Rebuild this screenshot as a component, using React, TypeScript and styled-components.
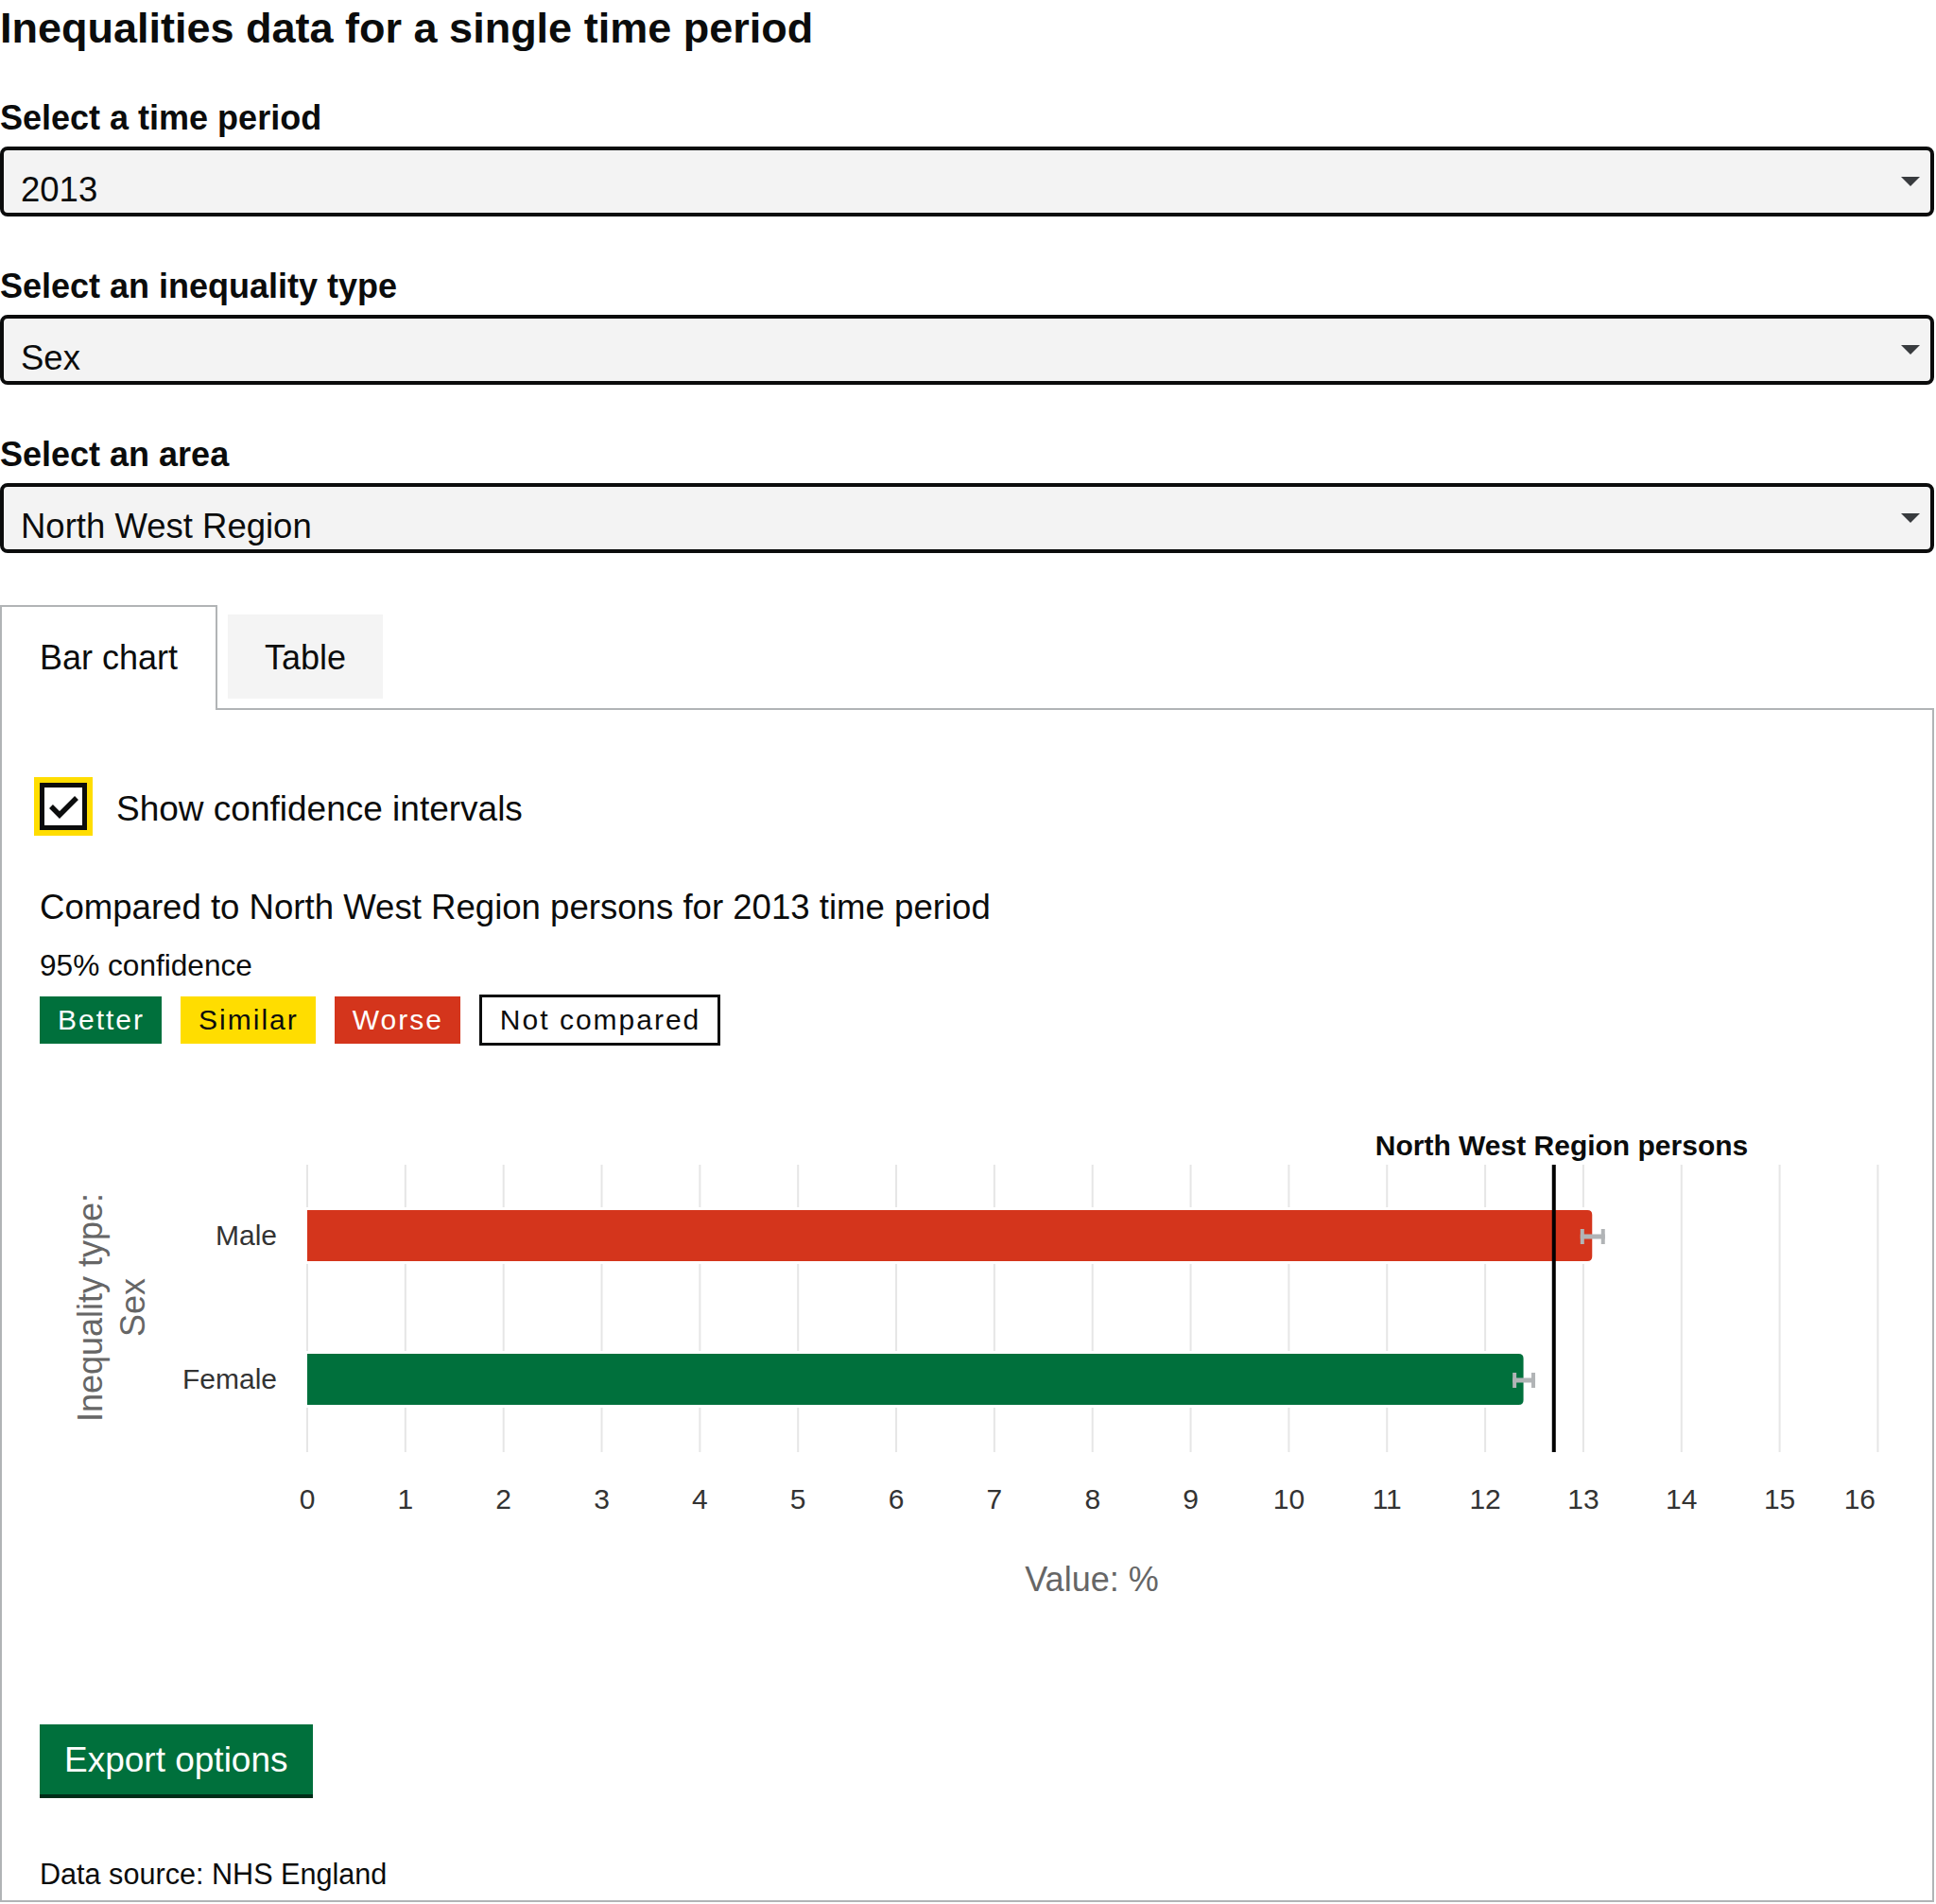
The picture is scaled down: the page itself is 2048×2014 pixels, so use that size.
import React from "react";
import styled, { createGlobalStyle } from "styled-components";

const GlobalStyle = createGlobalStyle`
  body {
    margin: 0;
    background: #ffffff;
    color: #0b0c0c;
    font-family: "Liberation Sans", Arial, sans-serif;
  }
`;

type Row = {
  label: string;
  value: number;
  lower: number;
  upper: number;
  colour: string;
};

const rows: Row[] = [
  { label: "Male", value: 13.09, lower: 12.97, upper: 13.22, colour: "#d4351c" },
  { label: "Female", value: 12.39, lower: 12.28, upper: 12.51, colour: "#00703c" },
];

const BENCHMARK = 12.7;
const X0 = 283;
const UNIT = 103.84;
const TOP = 92;
const BOTTOM = 396;

const xOf = (v: number) => X0 + v * UNIT;

const barPath = (y: number, h: number, end: number, r: number) =>
  `M ${X0} ${y} H ${end - r} Q ${end} ${y} ${end} ${y + r} V ${y + h - r} Q ${end} ${y + h} ${end - r} ${y + h} H ${X0} Z`;

const BarChart: React.FC = () => {
  const ticks = Array.from({ length: 17 }, (_, i) => i);
  return (
    <ChartSvg width={1962} height={640} viewBox="0 0 1962 640">
      {ticks.map((t) => (
        <line key={t} x1={xOf(t)} x2={xOf(t)} y1={TOP} y2={BOTTOM} stroke="#e6e6e6" strokeWidth={2} />
      ))}

      {rows.map((r, i) => {
        const y = 140 + i * 152;
        const cy = y + 28;
        const lo = xOf(r.lower);
        const hi = xOf(r.upper);
        return (
          <g key={r.label}>
            <path d={barPath(y, 54, xOf(r.value), 5)} fill={r.colour} stroke="#ffffff" strokeWidth={6} paintOrder="stroke" />
            <g stroke="#b1b4b6" strokeWidth={4}>
              <line x1={lo} x2={hi} y1={cy} y2={cy} strokeWidth={5} />
              <line x1={lo + 2} x2={lo + 2} y1={cy - 8} y2={cy + 8} />
              <line x1={hi - 2} x2={hi - 2} y1={cy - 8} y2={cy + 8} />
            </g>
            <CategoryText x={251} y={y + 37} textAnchor="end">
              {r.label}
            </CategoryText>
          </g>
        );
      })}

      <line x1={xOf(BENCHMARK)} x2={xOf(BENCHMARK)} y1={TOP} y2={BOTTOM} stroke="#000000" strokeWidth={4} />
      <BenchmarkText x={1610} y={82} textAnchor="middle">
        North West Region persons
      </BenchmarkText>

      {ticks.map((t) => (
        <TickText key={t} x={t === 16 ? 1942 : xOf(t)} y={456} textAnchor={t === 16 ? "end" : "middle"}>
          {t}
        </TickText>
      ))}

      <AxisTitle transform="translate(66 243) rotate(-90)" textAnchor="middle">
        Inequality type:
      </AxisTitle>
      <AxisTitle transform="translate(111 243) rotate(-90)" textAnchor="middle">
        Sex
      </AxisTitle>
      <AxisTitle x={1113} y={543} textAnchor="middle">
        Value: %
      </AxisTitle>
    </ChartSvg>
  );
};

const Select: React.FC<{ label: string; value: string }> = ({ label, value }) => (
  <FieldGroup>
    <Label>{label}</Label>
    <SelectBox role="combobox">
      <SelectValue>{value}</SelectValue>
      <Arrow />
    </SelectBox>
  </FieldGroup>
);

const App: React.FC = () => {
  return (
    <Page>
      <GlobalStyle />
      <Heading>Inequalities data for a single time period</Heading>
      <Select label="Select a time period" value="2013" />
      <Select label="Select an inequality type" value="Sex" />
      <Select label="Select an area" value="North West Region" />

      <TabList>
        <TabItem $selected>Bar chart</TabItem>
        <TabItem>Table</TabItem>
      </TabList>
      <Panel>
        <CheckRow>
          <FocusRing>
            <CheckBox>
              <svg width="40" height="40" viewBox="0 0 40 40">
                <polyline points="7,20 16,29 34,11" fill="none" stroke="#0b0c0c" strokeWidth={5.5} strokeLinejoin="miter" />
              </svg>
            </CheckBox>
          </FocusRing>
          <CheckLabel>Show confidence intervals</CheckLabel>
        </CheckRow>

        <Caption>Compared to North West Region persons for 2013 time period</Caption>
        <Confidence>95% confidence</Confidence>
        <TagRow>
          <Tag $variant="better">Better</Tag>
          <Tag $variant="similar">Similar</Tag>
          <Tag $variant="worse">Worse</Tag>
          <Tag $variant="none">Not compared</Tag>
        </TagRow>

        <BarChart />

        <ExportButton>Export options</ExportButton>
        <Source>Data source: NHS England</Source>
      </Panel>
    </Page>
  );
};

export default App;

const Page = styled.div`
  width: 2046px;
`;

const Heading = styled.h1`
  margin: 0;
  font-size: 45px;
  line-height: 60px;
  font-weight: 700;
`;

const FieldGroup = styled.div`
  margin-top: 45px;
  & + & {
    margin-top: 54px;
  }
`;

const Label = styled.label`
  display: block;
  font-size: 36px;
  line-height: 40px;
  font-weight: 700;
  margin-bottom: 10px;
`;

const SelectBox = styled.div`
  box-sizing: border-box;
  height: 74px;
  width: 100%;
  border: 4px solid #0b0c0c;
  border-radius: 8px;
  background: #f3f3f3;
  padding: 0 11px 0 18px;
  display: flex;
  align-items: center;
  justify-content: space-between;
`;

const SelectValue = styled.span`
  font-size: 36.5px;
  line-height: 40px;
  padding-top: 17px;
`;

const Arrow = styled.span`
  width: 0;
  height: 0;
  border-left: 10px solid transparent;
  border-right: 10px solid transparent;
  border-top: 10px solid #383b3e;
`;

const TabList = styled.ul`
  list-style: none;
  margin: 55px 0 -2px;
  padding: 0;
  display: flex;
  align-items: flex-start;
`;

const TabItem = styled.li<{ $selected?: boolean }>`
  font-size: 36px;
  line-height: 49px;
  position: relative;
  ${({ $selected }) =>
    $selected
      ? `
    background: #ffffff;
    border: 2px solid #b1b4b6;
    border-bottom: 0;
    padding: 29px 40px 31px;
    z-index: 1;
  `
      : `
    background: #f4f4f4;
    margin: 10px 0 0 11px;
    padding: 21px 39px 19px;
  `}
`;

const Panel = styled.div`
  border: 2px solid #b1b4b6;
  padding: 71px 40px 10px;
`;

const CheckRow = styled.div`
  display: flex;
  align-items: center;
`;

const FocusRing = styled.span`
  width: 62px;
  height: 62px;
  box-sizing: border-box;
  padding: 6px;
  margin-left: -6px;
  background: #ffdd00;
`;

const CheckBox = styled.span`
  display: block;
  width: 50px;
  height: 50px;
  box-sizing: border-box;
  border: 5px solid #0b0c0c;
  background: #ffffff;
  svg {
    display: block;
  }
`;

const CheckLabel = styled.span`
  font-size: 37px;
  line-height: 40px;
  padding-top: 6px;
  margin-left: 25px;
`;

const Caption = styled.p`
  margin: 56px 0 0;
  font-size: 36.6px;
  line-height: 40px;
`;

const Confidence = styled.p`
  margin: 23px 0 0;
  font-size: 31.6px;
  line-height: 36px;
`;

const tagColours = {
  better: { bg: "#00703c", fg: "#ffffff", border: "none" },
  similar: { bg: "#ffdd00", fg: "#0b0c0c", border: "none" },
  worse: { bg: "#d4351c", fg: "#ffffff", border: "none" },
  none: { bg: "#ffffff", fg: "#0b0c0c", border: "3px solid #0b0c0c" },
};

const TagRow = styled.div`
  margin-top: 13px;
  height: 54px;
  display: flex;
  align-items: center;
  gap: 20px;
`;

const Tag = styled.span<{ $variant: keyof typeof tagColours }>`
  box-sizing: border-box;
  display: inline-flex;
  align-items: center;
  height: ${({ $variant }) => ($variant === "none" ? "54px" : "50px")};
  padding: 0 18px 0 19px;
  font-size: 30px;
  letter-spacing: 2px;
  background: ${({ $variant }) => tagColours[$variant].bg};
  color: ${({ $variant }) => tagColours[$variant].fg};
  border: ${({ $variant }) => tagColours[$variant].border};
`;

const ChartSvg = styled.svg`
  display: block;
  margin-top: 34px;
  font-family: "Liberation Sans", Arial, sans-serif;
`;

const CategoryText = styled.text`
  font-size: 30px;
  fill: #333333;
`;

const TickText = styled.text`
  font-size: 30px;
  fill: #333333;
`;

const BenchmarkText = styled.text`
  font-size: 30px;
  font-weight: 700;
  fill: #0b0c0c;
`;

const AxisTitle = styled.text`
  font-size: 36px;
  fill: #666666;
`;

const ExportButton = styled.button`
  display: block;
  margin-top: 44px;
  height: 74px;
  padding: 0 26px;
  border: 0;
  border-radius: 0;
  background: #00703c;
  box-shadow: 0 4px 0 #002d18;
  color: #ffffff;
  font-family: inherit;
  font-size: 37px;
  line-height: 1;
  cursor: pointer;
`;

const Source = styled.p`
  margin: 66px 0 0;
  font-size: 30.6px;
  line-height: 36px;
`;
